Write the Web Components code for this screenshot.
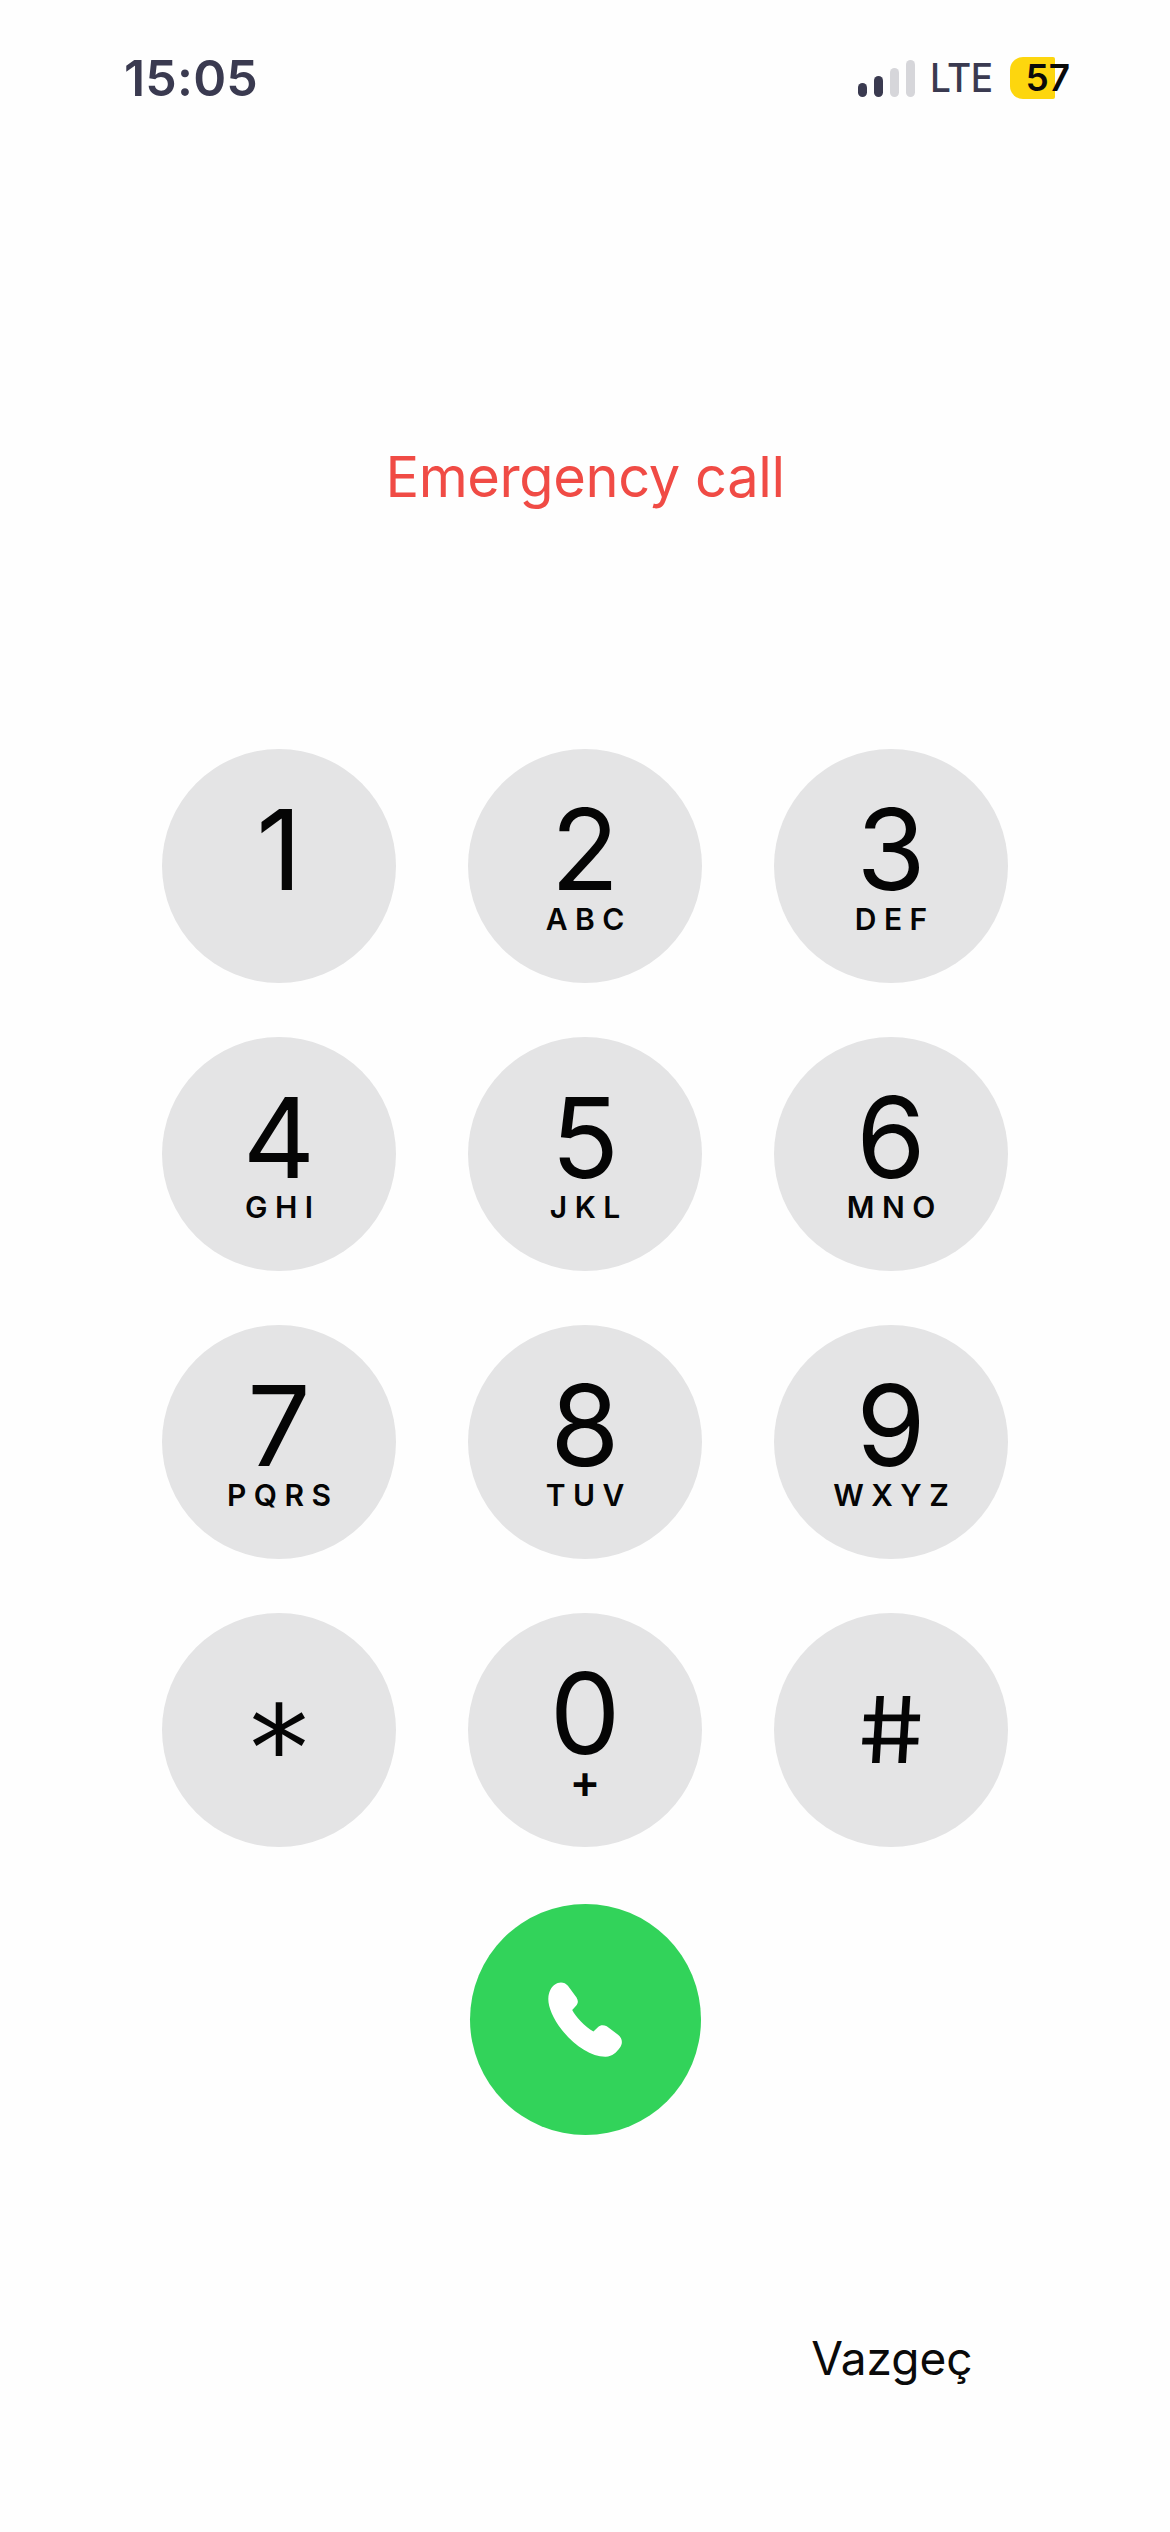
<!DOCTYPE html>
<html lang="tr"><head><meta charset="utf-8"><title>Emergency call</title>
<style>
html,body{margin:0;padding:0;background:#fefefe}
body{width:1170px;height:2532px;overflow:hidden;font-family:Inter,"Noto Sans",sans-serif}
</style></head><body>
<dial-screen></dial-screen>
<template id="status-tpl"><style>
:host{display:flex;justify-content:space-between;align-items:center;height:78px;padding:39px 100px 0 124px;box-sizing:content-box;color:#3a3a50}
.time{font:600 50px/78px Inter,sans-serif;letter-spacing:.2px}
.right{display:flex;align-items:center;height:78px}
.bars{display:flex;align-items:flex-end;gap:6.5px;height:37px;margin-right:15px;margin-top:1px}
.bars i{display:block;width:9.5px;border-radius:5px;background:#3a3a50}
.bars i.off{background:#d6d6da}
.lte{font:500 39px/78px Inter,sans-serif;margin-right:14px;transform:scaleX(.95);transform-origin:left center;letter-spacing:-.5px}
.bat{position:relative;width:60px;height:42px;display:flex;align-items:center;justify-content:flex-end}
.bat::before{content:"";position:absolute;left:0;top:0;bottom:0;width:45px;background:#fdd60e;border-radius:13px 2px 2px 13px}
.bat span{position:relative;font:600 37px/42px Inter,sans-serif;color:#0a0a0a}
</style><div class="time">15:05</div><div class="right"><div class="bars"><i style="height:14px"></i><i style="height:21px"></i><i class="off" style="height:29px"></i><i class="off" style="height:37px"></i></div><div class="lte">LTE</div><div class="bat"><span>57</span></div></div></template>
<template id="key-tpl"><style>
:host{display:flex;flex-direction:column;align-items:center;width:234px;height:234px;border-radius:50%;background:#e4e4e5;color:#050505;box-sizing:border-box}
.d{font:400 112px/100px Inter,sans-serif;margin-top:50px;height:100px}
.l{font:600 30px/30px Inter,sans-serif;letter-spacing:7.5px;margin-right:-7.5px;margin-top:5px;height:30px}
:host([kind=plus]) .l{font:600 46px/30px Inter,sans-serif;letter-spacing:0;margin:0;margin-top:3px}
:host([kind=star]) .d{font:400 118px/118px "DejaVu Sans",sans-serif;margin-top:77px;height:118px}
:host([kind=hash]) .d{font:400 92px/92px Inter,sans-serif;margin-top:71px;height:92px;transform:scaleX(1.12) skewX(6deg)}
</style><div class="d"><slot></slot></div><div class="l"></div></template>
<template id="screen-tpl"><style>
:host{display:block;width:1170px;height:2532px;background:#fefefe}
h1{margin:0;height:148px;padding-top:323px;text-align:center;font:400 56px/74px Inter,sans-serif;letter-spacing:-.4px;color:#f04b45}
.pad{display:grid;grid-template-columns:repeat(3,234px);column-gap:72px;row-gap:54px;justify-content:center;margin-top:161px}
.call{display:flex;align-items:center;justify-content:center;width:231px;height:231px;border-radius:50%;background:#32d35a;margin:57px auto 0}
.foot{display:grid;grid-template-columns:repeat(3,234px);column-gap:72px;justify-content:center;margin-top:193px}
.cancel{grid-column:3;text-align:center;font:400 46px/60px Inter,sans-serif;color:#0a0a0a;padding-left:2px}
</style>
<status-bar></status-bar>
<h1>Emergency call</h1>
<div class="pad">
<dial-key>1</dial-key><dial-key letters="ABC">2</dial-key><dial-key letters="DEF">3</dial-key>
<dial-key letters="GHI">4</dial-key><dial-key letters="JKL">5</dial-key><dial-key letters="MNO">6</dial-key>
<dial-key letters="PQRS">7</dial-key><dial-key letters="TUV">8</dial-key><dial-key letters="WXYZ">9</dial-key>
<dial-key kind="star">*</dial-key><dial-key kind="plus" letters="+">0</dial-key><dial-key kind="hash">#</dial-key>
</div>
<div class="call"><svg width="78" height="80" viewBox="290 275 235 240" aria-hidden="true"><path fill="#fff" d="M316 289C330 278 347 281 356 292L382 327C388 337 387 346 380 353L369 365C378 383 407 415 433 430L447 416C454 409 464 409 473 414L508 440C520 449 522 466 513 478C503 492 490 505 470 506C428 507 375 472 338 425C310 389 296 353 297 330C298 311 305 297 316 289Z"/></svg></div>
<div class="foot"><div class="cancel">Vazgeç</div></div>
</template>
<script>
class B extends HTMLElement{constructor(id){super();this.attachShadow({mode:"open"}).appendChild(document.getElementById(id).content.cloneNode(true));}}
class StatusBar extends B{constructor(){super("status-tpl");}}
class DialKey extends B{constructor(){super("key-tpl");}
connectedCallback(){const s=this.shadowRoot;s.querySelector(".l").textContent=this.getAttribute("letters")||"";}}
class DialScreen extends B{constructor(){super("screen-tpl");}}
customElements.define("status-bar",StatusBar);customElements.define("dial-key",DialKey);customElements.define("dial-screen",DialScreen);
</script>
</body></html>
